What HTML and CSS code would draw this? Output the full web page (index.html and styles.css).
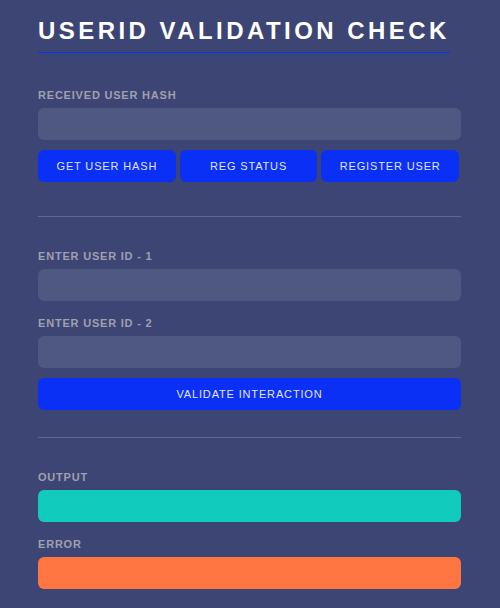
FILE: index.html
```html
<!DOCTYPE html>
<html>
<head>
<meta charset="utf-8">
<link rel="stylesheet" href="styles.css">
</head>
<body>
<div class="page">
  <h1 class="title">USERID VALIDATION CHECK</h1>

  <section class="section first">
    <label class="label">RECEIVED USER HASH</label>
    <div class="field"></div>
    <div class="btn-row">
      <button class="btn">GET USER HASH</button>
      <button class="btn">REG STATUS</button>
      <button class="btn">REGISTER USER</button>
    </div>
  </section>

  <hr class="divider">

  <section class="section">
    <label class="label">ENTER USER ID - 1</label>
    <div class="field"></div>
    <label class="label">ENTER USER ID - 2</label>
    <div class="field"></div>
    <button class="btn wide">VALIDATE INTERACTION</button>
  </section>

  <hr class="divider">

  <section class="section">
    <label class="label">OUTPUT</label>
    <div class="field output"></div>
    <label class="label">ERROR</label>
    <div class="field error"></div>
  </section>
</div>
</body>
</html>
```

FILE: styles.css
```css
html, body {
  margin: 0;
  padding: 0;
  background: #3c4574;
}
body {
  font-family: "Liberation Sans", Arial, sans-serif;
}
.page {
  width: 423px;
  padding: 16px 0 0 38px;
  display: flex;
  flex-direction: column;
}
.title {
  align-self: flex-start;
  white-space: nowrap;
  margin: 0;
  font-size: 24px;
  font-weight: bold;
  letter-spacing: 3.45px;
  color: #ffffff;
  line-height: 30px;
  padding-bottom: 6px;
  border-bottom: 1px solid #0b30f5;
}
.section {
  display: flex;
  flex-direction: column;
  padding-top: 33px;
}
.section.first {
  padding-top: 36px;
}
.label {
  font-size: 11px;
  font-weight: bold;
  letter-spacing: 0.8px;
  color: #a0a0ae;
  line-height: 12px;
  margin-bottom: 7px;
}
.field {
  height: 32px;
  flex: none;
  border-radius: 6px;
  background: #4f5881;
  margin-bottom: 10px;
}
.field + .label {
  margin-top: 6px;
}
.field.output { background: #11ccbc; }
.field.error { background: #ff7642; }
.btn-row {
  display: flex;
  gap: 4px;
  width: 421px;
  margin-bottom: 34px;
}
.btn {
  flex: 1;
  height: 32px;
  border: none;
  border-radius: 6px;
  background: #0a2ff5;
  color: #e4e4ff;
  font-family: "Liberation Sans", Arial, sans-serif;
  font-size: 11px;
  letter-spacing: 0.85px;
  padding: 0;
}
.btn.wide {
  flex: none;
  width: 100%;
  margin-bottom: 27px;
}
.divider {
  margin: 0;
  border: none;
  height: 1px;
  background: #5f6893;
  width: 423px;
}
```
